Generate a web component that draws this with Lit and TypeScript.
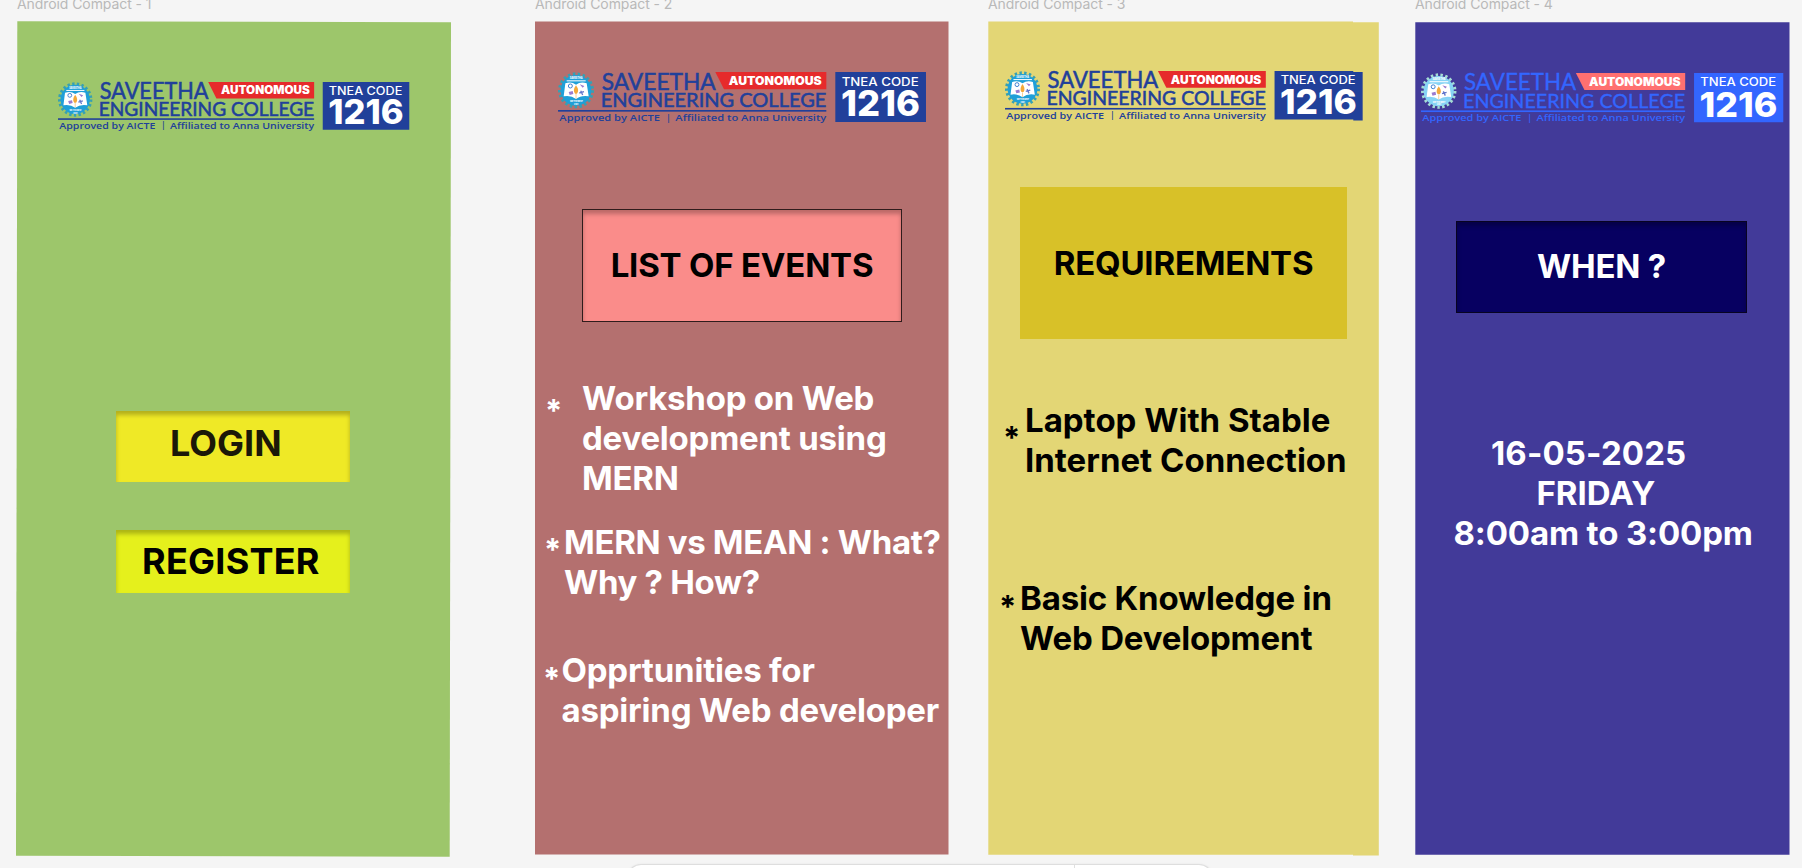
import { LitElement, html, svg, css } from "lit";
import { customElement, property } from "lit/decorators.js";

@customElement("college-logo")
class CollegeLogo extends LitElement {
  @property({ type: Boolean }) bright = false;
  @property({ type: Boolean }) stepped = false;

  static styles = css`
    :host { display: block; }
    svg { display: block; width: 100%; overflow: visible; }
    .ink { fill: #21409a; }
    .banner { fill: #e62a2b; }
    .gear { fill: #1f9fd8; }
    .teeth { stroke: #35a0b4; }
    .white { fill: #fff; }
    .bright .ink { fill: #3366ff; }
    .bright .banner { fill: #ff7070; }
    .bright .gear { fill: #86d3f5; }
    .bright .teeth { stroke: #a5dcd4; }
    .geo { font-family: Lato, sans-serif; font-weight: 400; stroke: #21409a; stroke-width: 1.6; }
    .bright .geo { stroke: #3366ff; stroke-width: 1; }
    .tag { font-family: "Open Sans", sans-serif; font-weight: 600; }
    .heavy { font-family: Inter, sans-serif; font-weight: 900; }
    .num { font-family: Inter, sans-serif; font-weight: 800; }
    .code { font-family: Inter, sans-serif; font-weight: 500; }
    .micro { font-family: Inter, sans-serif; font-weight: 800; }
  `;

  render() {
    const fit = "spacingAndGlyphs";
    return html`<svg class=${this.bright ? "bright" : ""} viewBox="0 0 1104 154">
      ${svg`
      <circle class="teeth" cx="54" cy="55" r="49" fill="none" stroke-width="10" stroke-dasharray="7.4 7.26"/>
      <circle class="gear" cx="54" cy="55" r="46"/>
      <text class="micro white" x="35" y="22" font-size="9" textLength="39" lengthAdjust=${fit}>SAVEETHA</text>
      <rect class="white" x="26" y="25" width="57" height="3"/>
      <path class="white" d="M22 34 Q40 28 54 38 Q68 28 86 34 L92 73 Q69 69 54 81 Q39 69 17 73Z"/>
      <circle cx="37" cy="42" r="6" fill="none" stroke="#3d7fd0" stroke-width="3"/>
      <path d="M65 37l14 5-5 5zM32 60l12-3 2 9-11 3z" fill="#9a7bd0"/>
      <path d="M64 63l14-4M68 56l6 13" stroke="#6477cc" stroke-width="4"/>
      <path d="M54 40 Q65 55 57 65 L51 65 Q43 55 54 40Z" fill="#f3a93a"/>
      <path d="M54 66V80" stroke="#e9b96a" stroke-width="2"/>
      <text class="micro white" x="36" y="91" font-size="8" textLength="38" lengthAdjust=${fit}>WE THE BEST</text>
      <text class="micro white" x="48" y="99" font-size="7" textLength="13" lengthAdjust=${fit}>2001</text>
      <text class="geo ink" x="131" y="53" font-size="71" textLength="342" lengthAdjust=${fit}>SAVEETHA</text>
      <text class="geo ink" x="128" y="106" font-size="58" textLength="677" lengthAdjust=${fit}>ENGINEERING COLLEGE</text>
      <path class="banner" d="M472 0H805V52H498Z"/>
      <text class="heavy white" x="512" y="39" font-size="35" textLength="279" lengthAdjust=${fit}>AUTONOMOUS</text>
      <rect class="ink" x="0" y="114" width="805" height="5"/>
      <text class="tag ink" x="4" y="147" font-size="29" textLength="302" lengthAdjust=${fit}>Approved by AICTE</text>
      <text class="tag ink" x="324" y="146" font-size="27">|</text>
      <text class="tag ink" x="352" y="147" font-size="29" textLength="453" lengthAdjust=${fit}>Affiliated to Anna University</text>
      <path class="ink" d=${this.stepped ? "M832 0H1075V3H1104V153H1075V150H832Z" : "M832 0H1104V150H832Z"}/>
      <text class="code white" x="851" y="41" font-size="35" textLength="231" lengthAdjust=${fit}>TNEA CODE</text>
      <text class="num white" x="849" y="133" font-size="106" textLength="237" lengthAdjust=${fit}>1216</text>`}
    </svg>`;
  }
}

@customElement("app-root")
class AppRoot extends LitElement {
  static styles = css`
    :host {
      display: block; width: 1802px; height: 868px; overflow: hidden; position: relative;
      background: #f5f5f5; font-family: Inter, sans-serif;
    }
    .canvas { display: flex; padding-left: 16px; align-items: flex-start; }
    .screen { flex: none; }
    .s1 { width: 435px; margin-right: 84px; }
    .s2 { width: 414px; margin-right: 39px; }
    .s3 { width: 391px; margin-right: 36px; }
    .s4 { width: 375px; }
    .label { margin-top: -5px; height: 26px; line-height: 17px; font-size: 14px; letter-spacing: -.08px; color: #b9b9b9; white-space: nowrap; }
    .s1 .label { padding-left: 1px; }
    .frame { height: 837px; box-sizing: border-box; display: flow-root; font-size: 33px; line-height: 40px; font-weight: 700; color: #fff; }
    .s1 .frame { background: #9dc66b; clip-path: polygon(1.3px .3px, 435px 1.2px, 433.7px 835.8px, 0 834.8px); }
    .s2 .frame { background: #b4706f; clip-path: polygon(0 .5px, 413.5px .5px, 413.5px 833.5px, 0 833.5px); }
    .s3 .frame { background: #e3d675; color: #000; clip-path: polygon(.3px .5px, 365px .5px, 365px 1.3px, 390.8px 1.3px, 390.8px 834.5px, 365px 834.5px, 365px 833.7px, .3px 833.7px); }
    .s4 .frame { background: #423a99; clip-path: polygon(.3px 1.3px, 374.5px 1.3px, 374.5px 833.7px, .3px 833.7px); }
    .s1 college-logo { width: 351.3px; margin: 61px 0 0 41.7px; height: 50px; }
    .s2 college-logo { width: 368px; margin: 51px 0 0 22.7px; height: 50px; }
    .s3 college-logo { width: 357.7px; margin: 50px 0 0 17px; height: 50px; }
    .s4 college-logo { width: 362.3px; margin: 52.4px 0 0 6px; height: 50px; }

    .btn { display: block; width: 234px; margin-left: 100px; padding: 0; border: 0; box-sizing: border-box; font: 700 36px/44px Inter, sans-serif; text-align: left; white-space: nowrap; box-shadow: inset 0 4px 4px rgba(0,0,0,.25); }
    .login { margin-top: 279px; height: 71px; background: #efe926; color: #1b1808; padding: 0 0 8px 54px; }
    .register { margin-top: 48px; height: 63px; background: #e5f01c; color: #000; padding: 0 0 1px 26px; letter-spacing: .25px; }

    .card { box-sizing: border-box; color: #000; text-align: center; white-space: nowrap; letter-spacing: -.2px; }
    .events { width: 320px; height: 113px; margin: 87px 0 0 47px; padding-top: 35px; border: 1px solid #301c1c; background: #fa8c8a; box-shadow: inset 0 4px 4px rgba(0,0,0,.25); }
    .needs { width: 327px; height: 152px; margin: 66px 0 0 32px; padding-top: 56px; background: #d8c128; }
    .when { width: 291px; height: 92px; margin: 97.6px 0 0 41px; padding-top: 24px; border: 1px solid #080422; background: #070061; color: #fff; box-shadow: inset 0 4px 4px rgba(0,0,0,.25); }

    .item { display: flex; white-space: nowrap; height: 80px; }
    .star { flex: none; font-size: 31px; line-height: 33px; letter-spacing: 0; margin-left: -1px; padding-right: 1px; box-sizing: border-box; }
    .i1 { margin-top: 56px; height: 120px; padding-left: 11px; letter-spacing: -.22px; }
    .i1 .star { width: 37px; margin-top: 16px; }
    .i2 { margin-top: 24px; padding-left: 10px; letter-spacing: -.33px; }
    .i2 .star { width: 20px; margin-top: 11px; }
    .i3 { margin-top: 48px; padding-left: 9px; letter-spacing: -.2px; }
    .i3 .star { width: 18.5px; margin-top: 12px; }
    .i4 { margin-top: 61px; padding-left: 16px; }
    .i4 .star { width: 22px; margin-top: 21px; }
    .i5 { margin-top: 98px; padding-left: 12px; letter-spacing: -.18px; }
    .i5 .star { width: 21px; margin-top: 12px; }
    .date { margin-top: 120px; white-space: nowrap; }
    .d1 { padding-left: 76px; letter-spacing: .12px; }
    .d2 { padding-left: 121.5px; }
    .d3 { padding-left: 38.5px; letter-spacing: -.15px; }

    .dock { position: absolute; left: 628px; top: 865px; width: 584px; height: 48px; border-radius: 13px; background: #fff; box-shadow: 0 0 1px 1px rgba(0,0,0,.08), 0 1px 4px rgba(0,0,0,.1); display: flex; }
    .divider { width: 1px; background: #e0e0e0; margin-left: 446px; }
  `;

  private item(cls: string, lines: string[]) {
    return html`<div class="item ${cls}"><span class="star">*</span><div>${lines.map(l => html`<div>${l}</div>`)}</div></div>`;
  }

  render() {
    return html`
      <div class="canvas">
        <section class="screen s1">
          <div class="label">Android Compact - 1</div>
          <div class="frame">
            <college-logo></college-logo>
            <button class="btn login">LOGIN</button>
            <button class="btn register">REGISTER</button>
          </div>
        </section>
        <section class="screen s2">
          <div class="label">Android Compact - 2</div>
          <div class="frame">
            <college-logo></college-logo>
            <div class="card events">LIST OF EVENTS</div>
            ${this.item("i1", ["Workshop on Web", "development using", "MERN"])}
            ${this.item("i2", ["MERN vs MEAN : What?", "Why ? How?"])}
            ${this.item("i3", ["Opprtunities for", "aspiring Web developer"])}
          </div>
        </section>
        <section class="screen s3">
          <div class="label">Android Compact - 3</div>
          <div class="frame">
            <college-logo stepped></college-logo>
            <div class="card needs">REQUIREMENTS</div>
            ${this.item("i4", ["Laptop With Stable", "Internet Connection"])}
            ${this.item("i5", ["Basic Knowledge in", "Web Development"])}
          </div>
        </section>
        <section class="screen s4">
          <div class="label">Android Compact - 4</div>
          <div class="frame">
            <college-logo bright></college-logo>
            <div class="card when">WHEN ?</div>
            <div class="date">
              <div class="d1">16-05-2025</div>
              <div class="d2">FRIDAY</div>
              <div class="d3">8:00am to 3:00pm</div>
            </div>
          </div>
        </section>
      </div>
      <div class="dock"><div class="divider"></div></div>
    `;
  }
}
